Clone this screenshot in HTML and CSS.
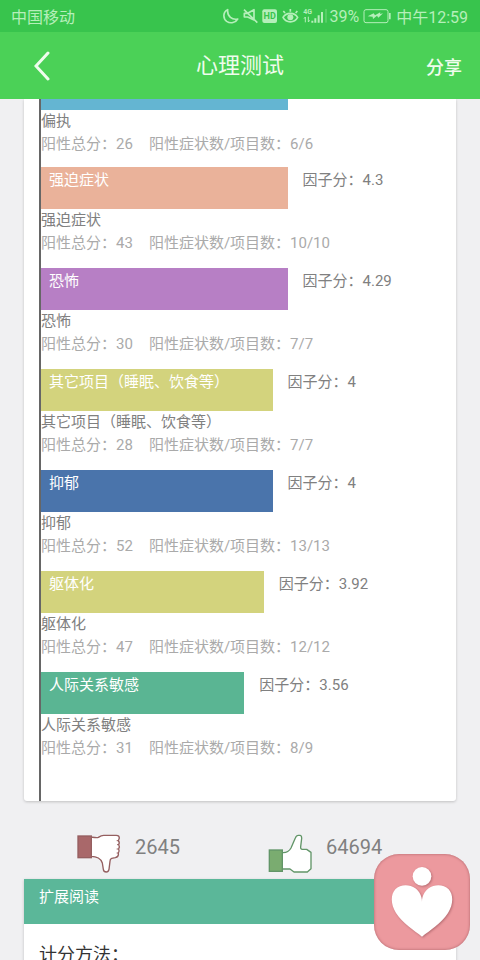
FILE: index.html
```html
<!DOCTYPE html>
<html lang="zh-CN">
<head>
<meta charset="utf-8">
<meta name="viewport" content="width=device-width, initial-scale=1">
<title>心理测试</title>
<link rel="stylesheet" href="styles.css">
</head>
<body>
<div class="status">
  <span class="carrier">中国移动</span>
  <svg class="status-icons" viewBox="42 24 312 48" aria-hidden="true">
    <path class="line" d="M56 29C42 35 41 55 53 64C65 72 80 68 86 57C70 61 54 49 56 29Z"/>
    <path class="line" d="M106 40H116L135 29V60L116 51H106ZM105 29L145 68"/>
    <rect class="solid" x="160" y="28" width="44" height="41" rx="6"/>
    <text class="hd" x="182" y="57" text-anchor="middle">HD</text>
    <path class="line" d="M222 52C232 36 256 36 266 52C256 70 232 70 222 52ZM228 39L223 33M244 35V27M260 39L265 33"/>
    <circle class="solid" cx="244" cy="52" r="9"/>
    <text class="net" x="283" y="43">4G</text>
    <path class="line thin" d="M289 67V51L285 56M298 50V66L302 61"/>
    <path class="bars" d="M310 68V62M319 68V55M329 68V46M339 68V36"/>
    <path class="faint" d="M351 68V27"/>
  </svg>
  <span>39%</span>
  <svg class="battery" viewBox="460 24 87 48" aria-hidden="true">
    <rect class="line thin" x="463" y="29" width="72" height="39" rx="6"/>
    <path class="solid" d="M538 39H543V58H538ZM474 49L492 40L496 46L512 37L511 42L520 40L506 53L502 47L490 57L489 50Z"/>
  </svg>
  <span>中午12:59</span>
</div>
<header class="nav">
  <button class="back" type="button" aria-label="返回">
    <svg viewBox="0 0 16 30" aria-hidden="true"><path d="M14 2L2 15L14 28"/></svg>
  </button>
  <h1>心理测试</h1>
  <button class="share" type="button">分享</button>
</header>
<main>
  <section class="card result">
    <ul class="chart">
      <li class="entry entry-first">
        <div class="row"><div class="bar blue" style="width:59.4%"></div></div>
        <p class="name">偏执</p>
        <p class="detail"><span>阳性总分：26</span><span>阳性症状数/项目数：6/6</span></p>
      </li>
      <li class="entry">
        <div class="row"><div class="bar salmon" style="width:59.4%">强迫症状</div><span class="score">因子分：4.3</span></div>
        <p class="name">强迫症状</p>
        <p class="detail"><span>阳性总分：43</span><span>阳性症状数/项目数：10/10</span></p>
      </li>
      <li class="entry">
        <div class="row"><div class="bar purple" style="width:59.4%">恐怖</div><span class="score">因子分：4.29</span></div>
        <p class="name">恐怖</p>
        <p class="detail"><span>阳性总分：30</span><span>阳性症状数/项目数：7/7</span></p>
      </li>
      <li class="entry">
        <div class="row"><div class="bar olive" style="width:55.8%">其它项目（睡眠、饮食等）</div><span class="score">因子分：4</span></div>
        <p class="name">其它项目（睡眠、饮食等）</p>
        <p class="detail"><span>阳性总分：28</span><span>阳性症状数/项目数：7/7</span></p>
      </li>
      <li class="entry">
        <div class="row"><div class="bar navy" style="width:55.8%">抑郁</div><span class="score">因子分：4</span></div>
        <p class="name">抑郁</p>
        <p class="detail"><span>阳性总分：52</span><span>阳性症状数/项目数：13/13</span></p>
      </li>
      <li class="entry">
        <div class="row"><div class="bar olive" style="width:53.7%">躯体化</div><span class="score">因子分：3.92</span></div>
        <p class="name">躯体化</p>
        <p class="detail"><span>阳性总分：47</span><span>阳性症状数/项目数：12/12</span></p>
      </li>
      <li class="entry">
        <div class="row"><div class="bar green" style="width:49%">人际关系敏感</div><span class="score">因子分：3.56</span></div>
        <p class="name">人际关系敏感</p>
        <p class="detail"><span>阳性总分：31</span><span>阳性症状数/项目数：8/9</span></p>
      </li>
    </ul>
  </section>
  <div class="votes">
    <button class="vote" type="button">
      <svg class="down" viewBox="52 130 132 120" aria-hidden="true">
        <path class="hand" d="M95 140C104 139 110 143 116 140C122 136 125 134 132 134H170Q179 134 179 142L176 150Q181 155 177 162Q181 168 177 175Q180 181 176 187Q178 198 167 201L156 203Q151 205 151 212L148 236Q146 244 140 244Q132 244 131 236L128 217Q125 207 116 202Q107 197 95 197Z"/>
        <path class="crease" d="M171 150H177M172 162H177M171 175H177M171 187H176"/>
        <rect class="cuff" x="55" y="136" width="40" height="65"/>
      </svg>
      <span>2645</span>
    </button>
    <button class="vote" type="button">
      <svg class="up" viewBox="52 130 132 120" aria-hidden="true">
        <path class="hand" d="M95 186C108 187 116 181 121 172L134 142Q137 134 143 134H148Q153 134 153 143L150 168Q149 176 155 176H168L181 185V234L170 244H130L118 235H95Z"/>
        <rect class="cuff" x="56" y="178" width="39" height="64"/>
      </svg>
      <span>64694</span>
    </button>
  </div>
  <section class="card reading">
    <h2>扩展阅读</h2>
    <p>计分方法：</p>
  </section>
</main>
<button class="float" type="button" aria-label="心理">
  <svg viewBox="0 0 288 288" aria-hidden="true">
    <circle cx="144" cy="67" r="28"/>
    <path d="M144 248C122 230 86 209 66 177C50 151 49 123 64 106C79 90 107 90 124 103C137 113 144 127 144 143C144 127 151 113 164 103C181 90 209 90 224 106C239 123 238 151 222 177C202 209 166 230 144 248Z"/>
  </svg>
</button>
</body>
</html>
```
FILE: styles.css
```css
* { box-sizing: border-box; margin: 0; padding: 0; }

body {
  display: flex;
  flex-direction: column;
  height: 100vh;
  overflow: hidden;
  background: #f0f0f2;
  color: #808080;
  font-family: Roboto, "Noto Sans CJK SC", sans-serif;
  font-size: 15px;
}

button {
  border: 0;
  background: none;
  color: inherit;
  font: inherit;
  cursor: pointer;
}

.status {
  display: flex;
  flex: none;
  align-items: center;
  height: 32px;
  padding: 0 12px 0 11px;
  background: #38c44d;
  color: #b5efba;
  font-size: 16px;
}
.carrier { margin-right: auto; }
.status-icons { width: 104px; height: 16px; margin-right: 2px; }
.battery { width: 29px; height: 16px; margin: 0 4px; }
.line { fill: none; stroke: #b5efba; stroke-width: 5; stroke-linejoin: round; }
.thin { stroke-width: 3; }
.solid { fill: #b5efba; }
.bars { fill: none; stroke: #b5efba; stroke-width: 6; }
.faint { stroke: #72d880; stroke-width: 3; }
.hd { fill: #38c44d; font-size: 27px; font-weight: 700; }
.net { fill: #b5efba; font-size: 21px; font-weight: 700; }

.nav {
  display: grid;
  grid-template-columns: 1fr auto 1fr;
  flex: none;
  align-items: center;
  height: 67px;
  padding: 0 18px;
  background: #4bd157;
  color: #effced;
}
.nav h1 { font-size: 22px; font-weight: 400; line-height: 32px; }
.back { justify-self: start; height: 30px; padding-left: 16px; }
.back svg { display: block; width: 16px; height: 30px; fill: none; stroke: #effced; stroke-width: 3; stroke-linecap: round; }
.share { justify-self: end; font-size: 18px; font-weight: 500; }

main { flex: 1; min-height: 0; padding: 0 24px; overflow: hidden; }
.card { background: #fff; box-shadow: 0 1px 3px rgba(0, 0, 0, 0.2); }
.result { padding-left: 15px; border-radius: 0 0 3px 3px; }

.chart { padding-bottom: 28px; border-left: 2px solid #666; list-style: none; }
.entry { padding-bottom: 14px; }
.entry-first { padding-bottom: 12px; }
.row { display: flex; gap: 15px; height: 42px; line-height: 26px; }
.entry-first .row { height: 11px; }
.bar { padding-left: 8px; color: #fff; white-space: nowrap; }
.blue { background: #64b5d2; }
.salmon { background: #eab29a; }
.purple { background: #b77fc5; }
.olive { background: #d3d37d; }
.navy { background: #4a74ab; }
.green { background: #5ab593; }
.name { line-height: 23px; }
.detail { display: flex; gap: 16px; color: #aaa; line-height: 22px; }

.votes { display: grid; grid-template-columns: 191px 1fr; padding: 33px 0 5px 53px; }
.vote { display: flex; justify-self: start; gap: 14px; color: #808080; font-size: 20px; line-height: 26px; }
.vote svg { width: 44px; height: 40px; }
.hand { fill: #fff; stroke-width: 4; stroke-linejoin: round; }
.crease { fill: none; stroke-width: 3; }
.cuff { stroke-width: 4; }
.down { stroke: #955f60; }
.down .cuff { fill: #a9686a; }
.up { stroke: #629568; }
.up .cuff { fill: #7aac70; }

.reading h2 {
  height: 45px;
  padding-left: 15px;
  background: #5bb799;
  color: #fff;
  font-size: 15px;
  font-weight: 400;
  line-height: 36px;
}
.reading p { padding: 16px 15px; color: #333; font-size: 18px; line-height: 30px; }

.float {
  position: fixed;
  right: 10px;
  bottom: 10px;
  width: 96px;
  height: 96px;
  border-radius: 25px;
  background: #ec999e;
  box-shadow: inset 0 0 3px #a96267;
}
.float svg { display: block; width: 96px; height: 96px; fill: #fff; filter: drop-shadow(1px 1px 1px #b86e74); }
```
